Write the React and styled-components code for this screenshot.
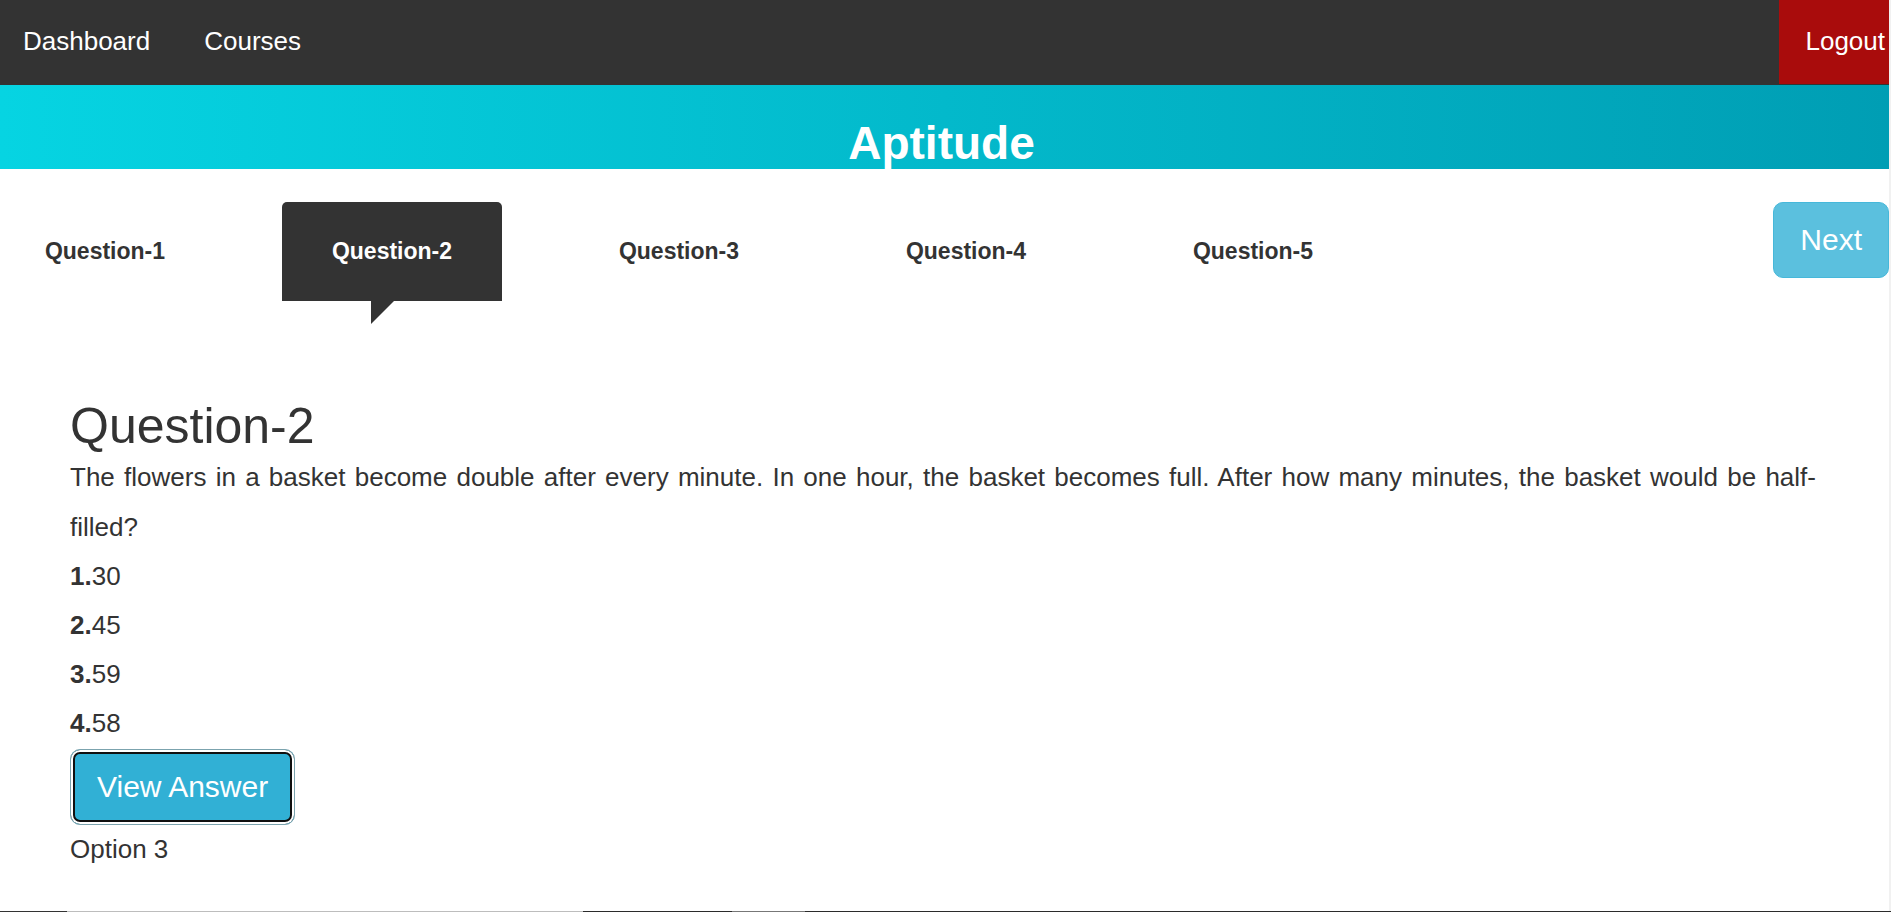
import React, { useState } from 'react';
import styled, { createGlobalStyle } from 'styled-components';

const GlobalStyle = createGlobalStyle`
  * { box-sizing: border-box; }
  body {
    margin: 0;
    background: #fff;
    color: #333;
    font-family: "Liberation Sans", Arial, Helvetica, sans-serif;
    font-size: 26px;
  }
  button { font-family: inherit; cursor: pointer; }
`;

const Page = styled.div`
  display: flex;
  flex-direction: column;
  min-height: 100vh;
`;

const Content = styled.div`
  flex: 1;
  border-right: 2px solid #f1f1f1;
`;

const NavBar = styled.nav`
  display: flex;
  justify-content: space-between;
  height: 85px;
  padding-bottom: 1px;
  background: #333;
`;

const NavGroup = styled.div`
  display: flex;
  gap: 8px;
`;

const NavLink = styled.a`
  display: flex;
  align-items: center;
  padding: 0 23px 2px;
  color: #fff;
  line-height: 32px;
  text-decoration: none;
`;

const LogoutLink = styled(NavLink)`
  padding: 0 4px 2px 26px;
  background: #a90c0c;
`;

const Banner = styled.header`
  display: flex;
  justify-content: center;
  height: 84px;
  padding: 32px 6px 0 0;
  overflow: hidden;
  background: linear-gradient(to right, #06d4e2, #009eb4);
`;

const BannerTitle = styled.h1`
  margin: 0;
  color: #fff;
  font-size: 46px;
  font-weight: bold;
  line-height: 52px;
`;

const TabRow = styled.div`
  display: flex;
  justify-content: space-between;
  align-items: flex-start;
  margin-top: 33px;
`;

const TabList = styled.div`
  display: flex;
  gap: 67px;
  margin-left: -5px;
`;

const Tab = styled.button`
  position: relative;
  width: 220px;
  height: 99px;
  padding: 0;
  border: 0;
  border-radius: 5px 5px 0 0;
  background: ${(p) => (p.$active ? '#333' : 'transparent')};
  color: ${(p) => (p.$active ? '#fff' : '#333')};
  font-size: 23px;
  font-weight: bold;

  &::after {
    content: "";
    display: ${(p) => (p.$active ? 'block' : 'none')};
    position: absolute;
    top: 100%;
    left: 89px;
    border-top: 23px solid #333;
    border-right: 23px solid transparent;
  }
`;

const Button = styled.button`
  height: 76px;
  padding: 0 26px;
  border: 1px solid #46b8da;
  border-radius: 10px;
  background: #5bc0de;
  color: #fff;
  font-size: 30px;
`;

const AnswerButton = styled(Button)`
  display: block;
  margin-top: 1px;
  border-color: #7ba3ae;
  background: #31b0d5;
  box-shadow: inset 0 0 0 2px #fff, inset 0 0 0 4px #101010;
  outline: none;
`;

const Panel = styled.main`
  padding: 99px 73px 0 70px;
`;

const Heading = styled.h2`
  margin: 0;
  font-size: 50px;
  font-weight: normal;
  line-height: 52px;
`;

const Text = styled.p`
  margin: 0;
  line-height: 50px;
  text-align: justify;
`;

const Option = styled(Text)`
  line-height: 49px;
`;

const BottomEdge = styled.div`
  height: 1px;
  background: linear-gradient(
    to right,
    #333 67px, #bdbdbd 67px, #bdbdbd 583px,
    #2b2b2b 583px, #2b2b2b 732px, #777 732px, #777 805px, #2b2b2b 805px
  );
`;

const tabs = [1, 2, 3, 4, 5];
const options = ['30', '45', '59', '58'];

export default function App() {
  const [active, setActive] = useState(2);
  const [shown, setShown] = useState(true);

  return (
    <Page>
      <GlobalStyle />
      <Content>
        <NavBar>
          <NavGroup>
            <NavLink href="#dashboard">Dashboard</NavLink>
            <NavLink href="#courses">Courses</NavLink>
          </NavGroup>
          <LogoutLink href="#logout">Logout</LogoutLink>
        </NavBar>
        <Banner>
          <BannerTitle>Aptitude</BannerTitle>
        </Banner>
        <TabRow>
          <TabList role="tablist">
            {tabs.map((n) => (
              <Tab
                key={n}
                type="button"
                role="tab"
                aria-selected={n === active}
                $active={n === active}
                onClick={() => setActive(n)}
              >
                Question-{n}
              </Tab>
            ))}
          </TabList>
          <Button type="button" onClick={() => setActive(Math.min(active + 1, 5))}>
            Next
          </Button>
        </TabRow>
        <Panel>
          <Heading>Question-{active}</Heading>
          <Text>
            The flowers in a basket become double after every minute. In one hour, the basket
            becomes full. After how many minutes, the basket would be half-filled?
          </Text>
          {options.map((value, i) => (
            <Option key={value}>
              <b>{i + 1}.</b>
              {value}
            </Option>
          ))}
          <AnswerButton type="button" onClick={() => setShown(!shown)}>
            View Answer
          </AnswerButton>
          {shown && <Option>Option 3</Option>}
        </Panel>
      </Content>
      <BottomEdge />
    </Page>
  );
}
